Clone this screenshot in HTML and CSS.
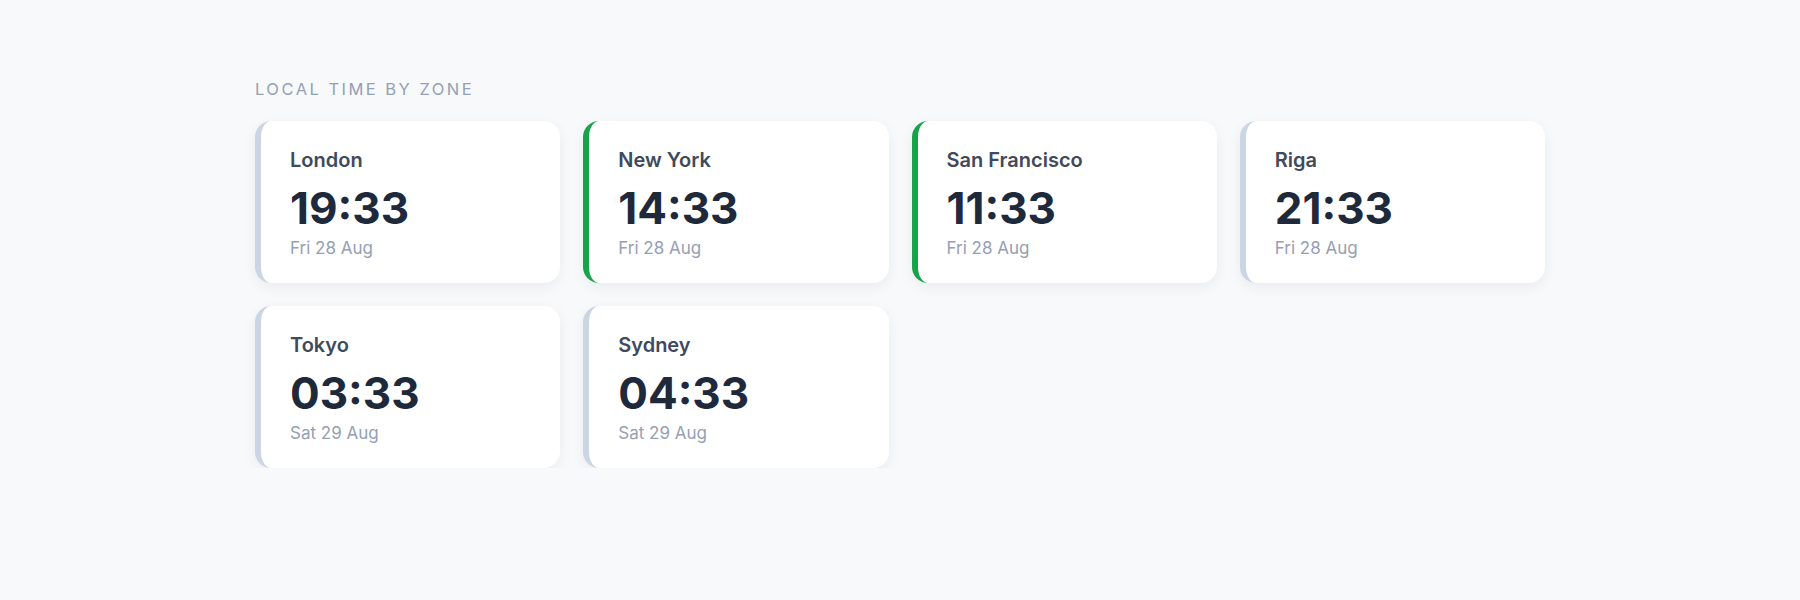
FILE: index.html
```html
<!DOCTYPE html>
<html lang="en">
<head>
  <meta charset="UTF-8" />
  <meta name="viewport" content="width=device-width, initial-scale=1" />
  <title>World Clock</title>
  <link rel="stylesheet" href="styles.css">
</head>
<body>

  <main class="container">
    <h2 class="label">Local time by zone</h2>

    <div class="clock-grid">
      <div class="clock">
        <h3>London</h3>
        <p class="time">19:33</p>
        <p class="date">Fri 28 Aug</p>
      </div>
      <div class="clock active">
        <h3>New York</h3>
        <p class="time">14:33</p>
        <p class="date">Fri 28 Aug</p>
      </div>
      <div class="clock active">
        <h3>San Francisco</h3>
        <p class="time">11:33</p>
        <p class="date">Fri 28 Aug</p>
      </div>
      <div class="clock">
        <h3>Riga</h3>
        <p class="time">21:33</p>
        <p class="date">Fri 28 Aug</p>
      </div>
      <div class="clock">
        <h3>Tokyo</h3>
        <p class="time">03:33</p>
        <p class="date">Sat 29 Aug</p>
      </div>
      <div class="clock">
        <h3>Sydney</h3>
        <p class="time">04:33</p>
        <p class="date">Sat 29 Aug</p>
      </div>
    </div>
  </main>

</body>
</html>
```

FILE: styles.css
```css
:root {
  --bg: #f8f9fb;
  --card: #ffffff;
  --ink: #1e293b;
  --city: #3f4a5c;
  --muted: #94a0b4;
  --edge: #cbd5e3;
  --green: #16a34a;
}

* {
  margin: 0;
  padding: 0;
  box-sizing: border-box;
}

body {
  font-family: 'Inter', 'Noto Sans', sans-serif;
  background: var(--bg);
  color: var(--ink);
}

.container {
  max-width: 1290px;
  margin: 0 auto;
  padding-top: 78px;
}

.label {
  font-size: 16.5px;
  font-weight: 400;
  letter-spacing: 0.15em;
  text-transform: uppercase;
  color: var(--muted);
  line-height: 22px;
  margin-bottom: 21px;
}

.clock-grid {
  display: grid;
  grid-template-columns: repeat(4, 1fr);
  gap: 23px;
}

.clock {
  background: var(--card);
  border-left: 6px solid var(--edge);
  border-radius: 16px;
  padding: 27px 30px 0 29px;
  height: 162px;
  box-shadow: 0 4px 14px rgba(15, 23, 42, 0.06);
}

.clock.active {
  border-left-color: var(--green);
}

.clock h3 {
  font-size: 20px;
  font-weight: 600;
  color: var(--city);
  line-height: 24px;
}

.time {
  font-size: 44px;
  font-weight: 700;
  line-height: 52px;
  margin-top: 10px;
}

.date {
  font-size: 17px;
  color: var(--muted);
  line-height: 22px;
  margin-top: 3px;
}
```
